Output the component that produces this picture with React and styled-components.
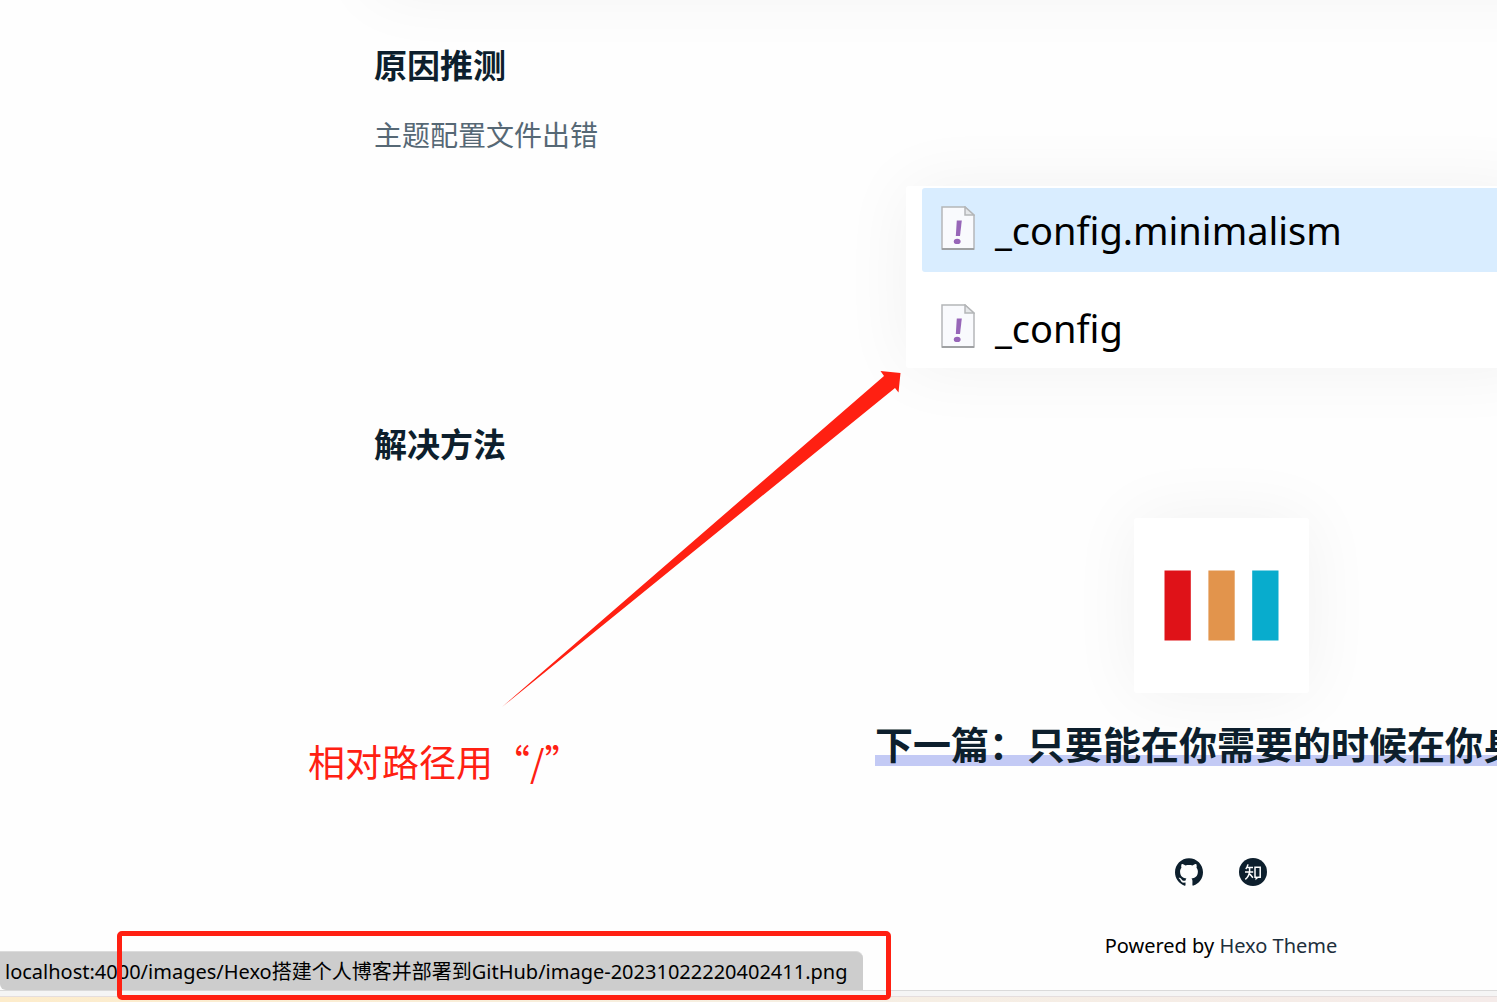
import React from "react";
import styled, { createGlobalStyle, css } from "styled-components";

const INK = "#0d1f2d";
const RED = "#ff2012";

const GlobalStyle = createGlobalStyle`
  * { box-sizing: border-box; }
  html, body { margin: 0; padding: 0; }
  body {
    overflow: hidden;
    background: #fefefe;
    color: ${INK};
    font-family: "Noto Sans", "Noto Sans CJK SC", sans-serif;
  }
`;

const Page = styled.div`
  position: relative;
  display: flex;
  flex-direction: column;
  min-height: 100vh;
  overflow: hidden;
`;

const Article = styled.main`
  flex: 1;
  display: flex;
  flex-direction: column;
  align-items: center;
  margin: 0 -571px 0 374px;
`;

const softShadow = css`
  border-radius: 3px;
  box-shadow: 0 0 70px rgba(0, 0, 0, 0.055);
`;

const PreviousFigure = styled.div`
  ${softShadow}
  align-self: stretch;
  height: 100px;
  margin-top: -108px;
`;

const Heading = styled.h3`
  align-self: stretch;
  margin: ${(p) => p.$top}px 0 0;
  font-family: "Noto Sans CJK SC", sans-serif;
  font-size: 33px;
  line-height: 48px;
  font-weight: 700;
`;

const Paragraph = styled.p`
  align-self: stretch;
  margin: 24px 0 0;
  font-family: "Noto Sans CJK SC", sans-serif;
  font-size: 28px;
  font-weight: 400;
  line-height: 44px;
  color: #566875;
`;

const FileList = styled.ul`
  ${softShadow}
  list-style: none;
  width: 630px;
  height: 182px;
  margin: 30px 0 0;
  padding: 2px 0 0 16px;
  display: flex;
  flex-direction: column;
  gap: 14px;
  overflow: hidden;
  background: #fff;
`;

const FileRow = styled.li`
  flex: none;
  display: flex;
  align-items: center;
  gap: 20px;
  height: 84px;
  padding: 0 19px 4px;
  border-radius: 3px;
  background: ${(p) => (p.$selected ? "#d9edff" : "transparent")};
  font-family: "Noto Sans", sans-serif;
  font-size: 38px;
  line-height: 48px;
  color: #000;
`;

const FileName = styled.span`
  padding-top: 4px;
`;

const LogoCard = styled.a`
  ${softShadow}
  display: flex;
  align-items: center;
  justify-content: center;
  width: 175px;
  height: 175px;
  margin-top: 51px;
  background: #fff;
`;

const NextLink = styled.a`
  margin-top: 25px;
  padding: 2px 8px 0 0;
  font-family: "Noto Sans CJK SC", sans-serif;
  font-size: 38px;
  line-height: 46px;
  font-weight: 700;
  color: ${INK};
  text-decoration: none;
  white-space: nowrap;
  background: linear-gradient(#c3caf5, #c3caf5) 0 100% / 100% 11px no-repeat;
`;

const Social = styled.nav`
  display: flex;
  gap: 36px;
  margin-top: 92px;

  a {
    display: flex;
    color: ${INK};
  }
`;

const Powered = styled.footer`
  margin-top: 44px;
  font-size: 20px;
  line-height: 32px;
  color: #000;

  a {
    color: #1d2f3c;
    text-decoration: none;
  }
`;

const Taskbar = styled.div`
  flex: none;
  height: 12px;
  border-top: 1px solid #dadada;
  background: linear-gradient(#f5f5f5, #f5f5f5) 0 0 / 100% 5px no-repeat,
    linear-gradient(#e5dede, #e5dede) 0 5px / 100% 1px no-repeat,
    linear-gradient(90deg, #fdeccb, #f6efe2 50%, #f5ebe9);
`;

const StatusBubble = styled.div`
  position: absolute;
  left: 0;
  bottom: 12px;
  height: 39px;
  padding: 0 16px 0 5px;
  border-top: 1px solid #dcdcdc;
  border-radius: 0 7px 0 6px;
  background: #cdcdcd;
  color: #000;
  font-size: 20px;
  line-height: 39px;
  white-space: nowrap;
`;

const Marker = styled.div`
  position: absolute;
  left: 117px;
  bottom: 2px;
  width: 774px;
  height: 69px;
  border: 5px solid ${RED};
  border-radius: 5px;
`;

const Arrow = styled.svg`
  position: absolute;
  left: 496px;
  top: 368px;
`;

const Note = styled.p`
  position: absolute;
  left: 308px;
  top: 737px;
  margin: 0;
  font-family: "Noto Sans CJK SC", sans-serif;
  font-size: 37px;
  font-weight: 400;
  line-height: 48px;
  color: ${RED};
`;

function FileIcon() {
  return (
    <svg width="34" height="44" viewBox="0 0 34 44" aria-hidden="true">
      <path d="M1 1H24L33 9V43H1Z" fill="#f9fafd" stroke="#b4b6b8" strokeWidth="1.5" />
      <path d="M24 1V9H33Z" fill="#e6e8ea" stroke="#b4b6b8" strokeWidth="1.5" />
      <path d="M1 43H33" stroke="#9fa1a3" strokeWidth="2" />
      <path d="M15.8 14.5H20.8L19 30H14.8Z" fill="#9766b8" />
      <ellipse cx="16.2" cy="35.4" rx="3.4" ry="2.7" fill="#9766b8" />
    </svg>
  );
}

function LogoBars() {
  return (
    <svg width="115" height="71" viewBox="0 0 115 71" aria-hidden="true">
      <rect x="0.5" y="0.5" width="26.3" height="70" fill="#df1218" />
      <rect x="44.4" y="0.5" width="26.3" height="70" fill="#e2944c" />
      <rect x="88.2" y="0.5" width="26.3" height="70" fill="#08accd" />
    </svg>
  );
}

function GithubIcon() {
  return (
    <svg width="28" height="28" viewBox="0 0 24 24" fill="currentColor" aria-hidden="true">
      <path d="M12 .297c-6.63 0-12 5.373-12 12 0 5.303 3.438 9.8 8.205 11.385.6.113.82-.258.82-.577 0-.285-.01-1.04-.015-2.04-3.338.724-4.042-1.61-4.042-1.61C4.422 18.07 3.633 17.7 3.633 17.7c-1.087-.744.084-.729.084-.729 1.205.084 1.838 1.236 1.838 1.236 1.07 1.835 2.809 1.305 3.495.998.108-.776.417-1.305.76-1.605-2.665-.3-5.466-1.332-5.466-5.93 0-1.31.465-2.38 1.235-3.22-.135-.303-.54-1.523.105-3.176 0 0 1.005-.322 3.3 1.23.96-.267 1.98-.399 3-.405 1.02.006 2.04.138 3 .405 2.28-1.552 3.285-1.23 3.285-1.23.645 1.653.24 2.873.12 3.176.765.84 1.23 1.91 1.23 3.22 0 4.61-2.805 5.625-5.475 5.92.42.36.81 1.096.81 2.22 0 1.606-.015 2.896-.015 3.286 0 .315.21.69.825.57C20.565 22.092 24 17.592 24 12.297c0-6.627-5.373-12-12-12" />
    </svg>
  );
}

function ZhihuIcon() {
  return (
    <svg width="28" height="28" viewBox="0 0 28 28" fill="none" aria-hidden="true">
      <circle cx="14" cy="14" r="14" fill={INK} />
      <g stroke="#fff" strokeWidth="1.5">
        <path d="M9 6.4Q8.4 9 6.8 11M8.3 9.4H14M6 14H14.2M10.6 9.4V13Q10.3 18.4 6.3 21.4M10.9 16L13.9 19.8" />
        <path d="M16 9.3H21.2V19.2H18.8L17.2 20.6V19.2H16Z" />
      </g>
    </svg>
  );
}

const files = [
  { name: "_config.minimalism", selected: true },
  { name: "_config", selected: false },
];

export default function App() {
  return (
    <Page lang="zh-CN">
      <GlobalStyle />
      <Article>
        <PreviousFigure />
        <Heading $top={48}>原因推测</Heading>
        <Paragraph>主题配置文件出错</Paragraph>
        <FileList>
          {files.map((file) => (
            <FileRow key={file.name} $selected={file.selected}>
              <FileIcon />
              <FileName>{file.name}</FileName>
            </FileRow>
          ))}
        </FileList>
        <Heading $top={51}>解决方法</Heading>
        <LogoCard href="#next" aria-label="下一篇">
          <LogoBars />
        </LogoCard>
        <NextLink href="#next">下一篇：只要能在你需要的时候在你身边</NextLink>
        <Social>
          <a href="#github" aria-label="GitHub"><GithubIcon /></a>
          <a href="#zhihu" aria-label="知乎"><ZhihuIcon /></a>
        </Social>
        <Powered>
          Powered by <a href="#theme">Hexo Theme</a>
        </Powered>
      </Article>
      <Taskbar />
      <StatusBubble>
        localhost:4000/images/Hexo搭建个人博客并部署到GitHub/image-20231022220402411.png
      </StatusBubble>
      <Marker />
      <Arrow width="408" height="346" viewBox="496 368 408 346" aria-hidden="true">
        <path d="M502 707L884 376L880.5 371L900.5 373L898.5 392.5L895 388Z" fill={RED} />
      </Arrow>
      <Note>相对路径用“/”</Note>
    </Page>
  );
}
